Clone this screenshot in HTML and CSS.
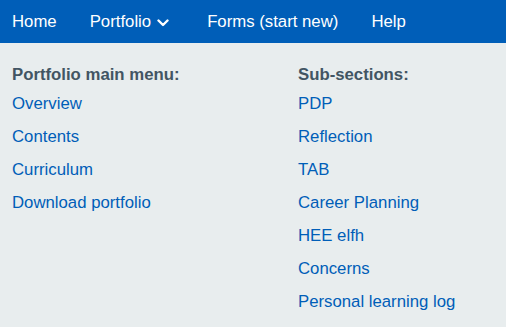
FILE: index.html
```html
<!DOCTYPE html>
<html lang="en">
<head>
    <meta charset="UTF-8">
    <meta name="viewport" content="width=device-width, initial-scale=1.0">
    <title>Portfolio</title>
    <link rel="stylesheet" href="styles.css">
</head>
<body>
    <nav class="topnav">
        <a href="#" class="nav-link">Home</a>
        <a href="#" class="nav-link nav-dropdown">Portfolio
            <svg class="chevron" width="12" height="8" viewBox="0 0 12 8">
                <polyline points="1.5,1.5 6,6 10.5,1.5" fill="none" stroke="#ffffff" stroke-width="2.4" stroke-linecap="round" stroke-linejoin="round"/>
            </svg>
        </a>
        <a href="#" class="nav-link">Forms (start new)</a>
        <a href="#" class="nav-link">Help</a>
    </nav>

    <div class="menu-panel">
        <div class="menu-column">
            <h3 class="menu-title">Portfolio main menu:</h3>
            <a href="#" class="menu-link">Overview</a>
            <a href="#" class="menu-link">Contents</a>
            <a href="#" class="menu-link">Curriculum</a>
            <a href="#" class="menu-link">Download portfolio</a>
        </div>
        <div class="menu-column">
            <h3 class="menu-title">Sub-sections:</h3>
            <a href="#" class="menu-link">PDP</a>
            <a href="#" class="menu-link">Reflection</a>
            <a href="#" class="menu-link">TAB</a>
            <a href="#" class="menu-link">Career Planning</a>
            <a href="#" class="menu-link">HEE elfh</a>
            <a href="#" class="menu-link">Concerns</a>
            <a href="#" class="menu-link">Personal learning log</a>
        </div>
    </div>
</body>
</html>
```

FILE: styles.css
```css
body {
    font-family: "Liberation Sans", Arial, sans-serif;
    font-size: 16.75px;
    line-height: 20px;
    margin: 0;
    padding: 0;
    background-color: #e8edee;
}
.topnav {
    display: flex;
    align-items: center;
    gap: 33px;
    background-color: #005eb8;
    padding: 12px 12px 11px;
}
.nav-link {
    color: #ffffff;
    text-decoration: none;
    display: flex;
    align-items: center;
}
.nav-dropdown {
    margin-right: 5px;
}
.chevron {
    margin-left: 6px;
    margin-top: 1px;
}
.menu-panel {
    display: grid;
    grid-template-columns: 286px 1fr;
    padding: 22px 12px 0;
}
.menu-column {
    display: flex;
    flex-direction: column;
    align-items: flex-start;
}
.menu-title {
    margin: 0 0 9px;
    font-size: 16.75px;
    font-weight: bold;
    color: #425563;
}
.menu-link {
    color: #005eb8;
    text-decoration: none;
    margin-bottom: 13px;
}
```
